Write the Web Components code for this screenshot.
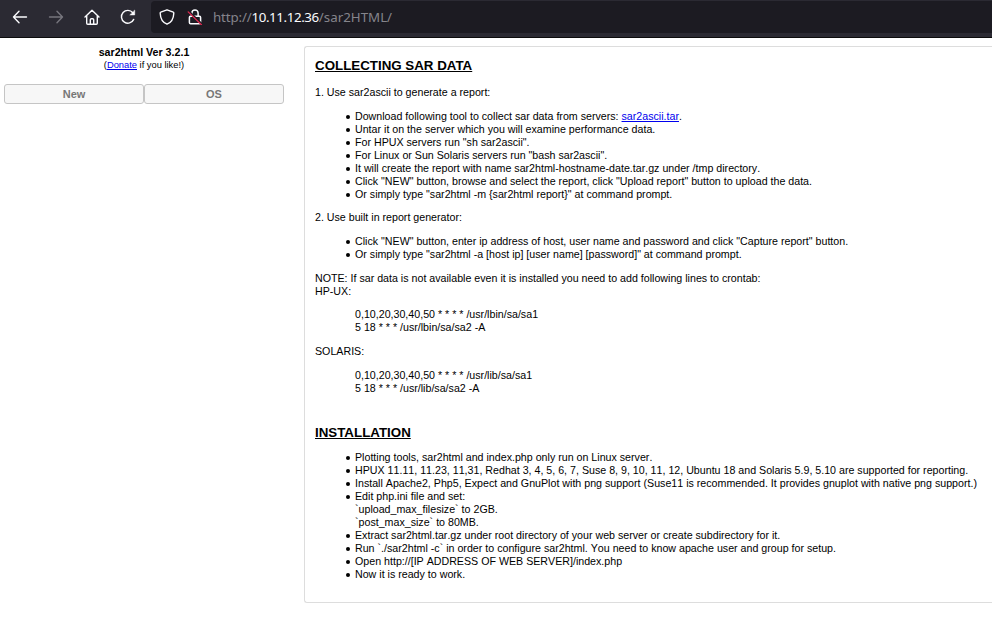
<!DOCTYPE html>
<html lang="en">
<head>
<meta charset="utf-8">
<title>sar2html</title>
<style>
html,body{margin:0;height:100%;overflow:hidden;background:#fff}
body{font:10.667px/13px "Liberation Sans",Arial,sans-serif;color:#000}
</style>
</head>
<body>
<sar-app></sar-app>
<script>
const define=(name,html)=>customElements.define(name,class extends HTMLElement{
  constructor(){super();this.attachShadow({mode:'open'}).innerHTML=html;}
});

define('browser-bar',`
<style>
:host{display:flex;height:37px;background:#2b2a33;border-bottom:1px solid #0c0c0d;box-sizing:content-box;overflow:hidden}
nav{display:flex;width:151px;flex:none;padding:9px 0 0 12px;box-sizing:border-box;gap:20px}
svg{width:16px;height:16px;flex:none;fill:none;stroke:#fbfbfe;stroke-width:1.4;stroke-linecap:round;stroke-linejoin:round}
.dim{stroke:#77767e}
.field{flex:1;height:32px;margin-top:1px;background:#1c1b22;border-radius:4px 0 0 4px;display:flex;align-items:center;padding-left:8px;gap:12px}
.url{font:13.33px/18px "Noto Sans","Open Sans",sans-serif;color:#85848b;white-space:pre;margin-left:-2px}
.scheme{letter-spacing:-.15px}
b{font-weight:400;color:#fbfbfe;letter-spacing:-.4px}
</style>
<nav>
<svg viewBox="0 0 16 16"><path d="M7 2.3 1.5 8 7 13.7M1.5 8H14.5"/></svg>
<svg class="dim" viewBox="0 0 16 16"><path d="M9 2.3 14.5 8 9 13.7M14.5 8H1.5"/></svg>
<svg viewBox="0 0 16 16"><path d="M1 8 8 1.3 15 8M2.7 6.8V14.3Q2.7 15.2 3.7 15.2H12.3Q13.3 15.2 13.3 14.3V6.8M6.3 15V10.7Q6.3 9.7 7.3 9.7H8.7Q9.7 9.7 9.7 10.7V15"/></svg>
<svg viewBox="0 0 16 16"><path d="M13.7 10.4A6.4 6.4 0 1 1 12.8 3.7"/><path d="M14.7 1.5V5.9H10.2Z" fill="#fbfbfe" stroke-width=".6"/></svg>
</nav>
<div class="field">
<svg viewBox="0 0 16 16"><path d="M8 .8 14.3 3.2Q14.9 3.4 14.8 4.2C14.6 9.6 12.2 13.5 8 15.2 3.8 13.5 1.4 9.6 1.2 4.2Q1.1 3.4 1.7 3.2Z"/></svg>
<svg viewBox="0 0 16 16"><path d="M4.9 7V4a3.1 3.1 0 0 1 6.2 0V7M3.5 7.3H12.5Q13.6 7.3 13.6 8.4V13.4Q13.6 14.7 12.4 14.7H3.6Q2.4 14.7 2.4 13.4V8.4Q2.4 7.3 3.5 7.3Z" stroke-width="1.5"/><path d="M2.2 2.7 15.3 15.5" stroke="#1c1b22" stroke-width="2"/><path d="M1.2 2.9 14.4 15.7" stroke="#e22850" stroke-width="1.3"/></svg>
<span class="url"><span class="scheme">http://</span><b>10.11.12.36</b>/sar2HTML/</span>
</div>`);

define('tool-button',`
<style>
:host{display:block;width:140px;height:20px;box-sizing:border-box;border:1px solid #c5c5c5;border-radius:3px;background:#f7f7f7;color:#777;text-align:center;font-size:11px;font-weight:bold;line-height:18px}
</style><slot></slot>`);

define('side-menu',`
<style>
:host{display:block;width:280px;flex:none;padding:8px 0 0 4px;text-align:center}
h1{font-size:10.667px;line-height:13px;margin:0}
p{font-size:9.33px;line-height:11px;margin:1px 0 13px}
a{color:#00e}
.row{display:flex}
</style>
<h1>sar2html Ver 3.2.1</h1>
<p>(<a href="#">Donate</a> if you like!)</p>
<div class="row"><tool-button>New</tool-button><tool-button>OS</tool-button></div>`);

define('doc-heading',`
<style>:host{display:block;font-size:13.33px;line-height:15px;font-weight:bold;text-decoration:underline;font-kerning:normal}</style><slot></slot>`);

define('bullet-list',`
<style>
:host{display:block;padding-left:40px}
::slotted(li){display:block;list-style:none}
::slotted(li)::before{content:"";display:inline-block;width:4px;height:4px;border-radius:50%;background:#000;margin-left:-9px;margin-right:5px;vertical-align:1px}
</style><slot></slot>`);

define('doc-panel',`
<style>
:host{display:block;box-sizing:border-box;flex:1;height:557px;margin:8px 0 0 20px;padding:11px 0 0 10px;border:1px solid #ddd;border-right:0;border-radius:3px 0 0 3px;white-space:nowrap;font-kerning:none}
p{margin:0}
a{color:#00e}
.lead{margin-top:13px}
bullet-list{margin:11px 0 10px}
.code{margin:10px 0 11px 40px}
.install{margin-top:30px}
</style>
<doc-heading>COLLECTING SAR DATA</doc-heading>
<p class="lead">1. Use sar2ascii to generate a report:</p>
<bullet-list>
<li>Download following tool to collect sar data from servers: <a href="#">sar2ascii.tar</a>.</li>
<li>Untar it on the server which you will examine performance data.</li>
<li>For HPUX servers run "sh sar2ascii".</li>
<li>For Linux or Sun Solaris servers run "bash sar2ascii".</li>
<li>It will create the report with name sar2html-hostname-date.tar.gz under /tmp directory.</li>
<li>Click "NEW" button, browse and select the report, click "Upload report" button to upload the data.</li>
<li>Or simply type "sar2html -m {sar2html report}" at command prompt.</li>
</bullet-list>
<p>2. Use built in report generator:</p>
<bullet-list style="margin-bottom:11px">
<li>Click "NEW" button, enter ip address of host, user name and password and click "Capture report" button.</li>
<li>Or simply type "sar2html -a [host ip] [user name] [password]" at command prompt.</li>
</bullet-list>
<p>NOTE: If sar data is not available even it is installed you need to add following lines to crontab:<br>HP-UX:</p>
<p class="code">0,10,20,30,40,50 * * * * /usr/lbin/sa/sa1<br>5 18 * * * /usr/lbin/sa/sa2 -A</p>
<p>SOLARIS:</p>
<p class="code" style="margin-top:11px">0,10,20,30,40,50 * * * * /usr/lib/sa/sa1<br>5 18 * * * /usr/lib/sa/sa2 -A</p>
<doc-heading class="install">INSTALLATION</doc-heading>
<bullet-list>
<li>Plotting tools, sar2html and index.php only run on Linux server.</li>
<li>HPUX 11.11, 11.23, 11,31, Redhat 3, 4, 5, 6, 7, Suse 8, 9, 10, 11, 12, Ubuntu 18 and Solaris 5.9, 5.10 are supported for reporting.</li>
<li>Install Apache2, Php5, Expect and GnuPlot with png support (Suse11 is recommended. It provides gnuplot with native png support.)</li>
<li>Edit php.ini file and set:<br>\`upload_max_filesize\` to 2GB.<br>\`post_max_size\` to 80MB.</li>
<li>Extract sar2html.tar.gz under root directory of your web server or create subdirectory for it.</li>
<li>Run \`./sar2html -c\` in order to configure sar2html. You need to know apache user and group for setup.</li>
<li>Open http://[IP ADDRESS OF WEB SERVER]/index.php</li>
<li>Now it is ready to work.</li>
</bullet-list>`);

define('sar-app',`
<style>:host{display:block}main{display:flex;align-items:flex-start}</style>
<browser-bar></browser-bar>
<main><side-menu></side-menu><doc-panel></doc-panel></main>`);
</script>
</body>
</html>
